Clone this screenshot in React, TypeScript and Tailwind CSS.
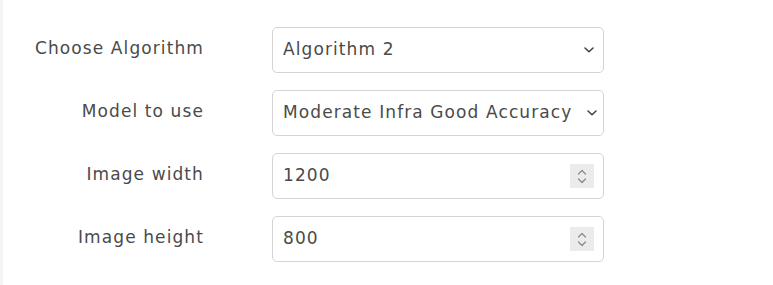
import React from "react";

function Chevron() {
  return (
    <svg width="10" height="6" viewBox="0 0 10 6" className="shrink-0">
      <path d="M1 1 L5 4.8 L9 1" fill="none" stroke="#3f3f3f" strokeWidth="1.5" strokeLinecap="round" strokeLinejoin="round" />
    </svg>
  );
}

function Spinner() {
  return (
    <div className="w-[24px] h-[24px] bg-[#ebebeb] flex flex-col items-center justify-center gap-[3px] shrink-0">
      <svg width="10" height="6" viewBox="0 0 10 6">
        <path d="M1.5 5 L5 1.5 L8.5 5" fill="none" stroke="#8a8a8a" strokeWidth="1.2" strokeLinecap="round" strokeLinejoin="round" />
      </svg>
      <svg width="10" height="6" viewBox="0 0 10 6">
        <path d="M1.5 1 L5 4.5 L8.5 1" fill="none" stroke="#8a8a8a" strokeWidth="1.2" strokeLinecap="round" strokeLinejoin="round" />
      </svg>
    </div>
  );
}

function Row({ label, pr, children }: { label: string; pr?: string; children: React.ReactNode }) {
  return (
    <>
      <div className="text-right self-center pb-[3px] whitespace-nowrap">{label}</div>
      <div className={"h-[46px] border border-[#d4d4d4] rounded-[5px] bg-white flex items-center pl-[10px] overflow-hidden " + (pr ?? "pr-[9px]")}>
        {children}
      </div>
    </>
  );
}

export default function App() {
  return (
    <div
      className="w-[773px] h-[285px] bg-white flex items-start text-[#4a4a4a] text-[17px] tracking-[1.1px]"
      style={{ fontFamily: '"DejaVu Sans", sans-serif' }}
    >
      <div className="w-[3px] h-full bg-[#f4f4f4]" />
      <div className="pt-[27px] grid grid-cols-[201px_332px] content-start gap-x-[68px] gap-y-[17px]">
        <Row label="Choose Algorithm">
          <span className="flex-1">Algorithm 2</span>
          <Chevron />
        </Row>
        <Row label="Model to use" pr="pr-[6px]">
          <span className="flex-1 whitespace-nowrap">Moderate Infra Good Accuracy</span>
          <Chevron />
        </Row>
        <Row label="Image width">
          <span className="flex-1">1200</span>
          <Spinner />
        </Row>
        <Row label="Image height">
          <span className="flex-1">800</span>
          <Spinner />
        </Row>
      </div>
    </div>
  );
}
